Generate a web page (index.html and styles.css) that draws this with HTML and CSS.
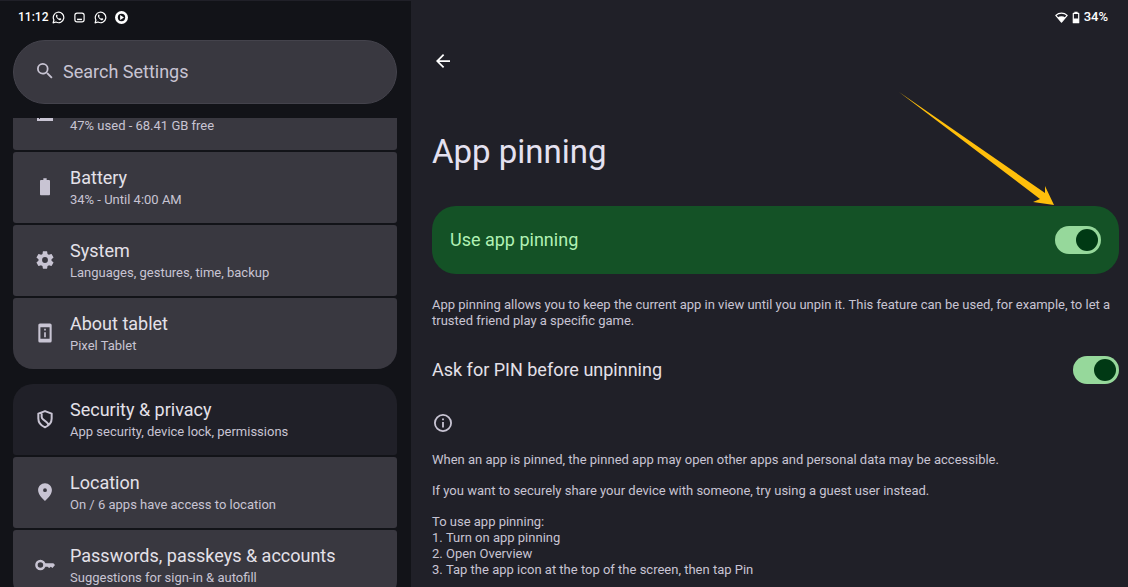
FILE: index.html
```html
<!DOCTYPE html>
<html lang="en">
<head>
<meta charset="utf-8">
<meta name="viewport" content="width=device-width, initial-scale=1">
<title>App pinning</title>
<link rel="stylesheet" href="styles.css">
</head>
<body>
<div class="screen">
  <aside class="sidebar">
    <div class="status">
      <span class="status-text status-time">11:12</span>
      <div class="status-icons">
        <svg class="status-icon" viewBox="0 0 24 24" aria-hidden="true"><path d="M2 22l1.600-5.400A9.700 9.700 0 1 1 7.400 20.400z" fill="none" stroke="currentColor" stroke-width="2.200" stroke-linejoin="round"/><path d="M8.300 6.800c-1.300.8-1.500 2.600-.4 4.600 1.100 2.200 2.800 3.900 5 5 2 .9 3.800.5 4.300-1 .2-.7.1-1-.4-1.200l-2.200-1.100-1.300 1.400c-1.900-.8-3.200-2.100-3.900-3.800l1.100-1.400-1-2.300c-.3-.5-.7-.5-1.200-.2z" fill="currentColor"/></svg>
        <svg class="status-icon" viewBox="0 0 24 24" aria-hidden="true"><rect x="3.500" y="4" width="17" height="16" rx="4" fill="none" stroke="currentColor" stroke-width="2.200"/><path d="M7.500 15.500h9" stroke="currentColor" stroke-width="2.600"/></svg>
        <svg class="status-icon" viewBox="0 0 24 24" aria-hidden="true"><path d="M2 22l1.600-5.400A9.700 9.700 0 1 1 7.400 20.400z" fill="none" stroke="currentColor" stroke-width="2.200" stroke-linejoin="round"/><path d="M8.300 6.800c-1.300.8-1.500 2.600-.4 4.600 1.100 2.200 2.800 3.900 5 5 2 .9 3.800.5 4.300-1 .2-.7.1-1-.4-1.200l-2.200-1.100-1.300 1.400c-1.900-.8-3.200-2.100-3.900-3.800l1.100-1.400-1-2.300c-.3-.5-.7-.5-1.200-.2z" fill="currentColor"/></svg>
        <svg class="status-icon" viewBox="0 0 24 24" aria-hidden="true"><circle cx="12" cy="12" r="12" fill="currentColor"/><circle cx="12" cy="12" r="6.800" fill="#121318"/><path d="M9.500 7.500v9l7-4.500z" fill="currentColor"/></svg>
      </div>
    </div>
    <label class="search">
      <svg class="search-icon" viewBox="3 3 18 18" aria-hidden="true"><path fill="currentColor" d="M15.500 14h-.79l-.28-.27A6.470 6.470 0 0 0 16 9.500 6.500 6.500 0 1 0 9.500 16c1.610 0 3.090-.59 4.230-1.570l.27.28v.79l5 4.990L20.490 19l-4.990-5zm-6 0a4.500 4.500 0 1 1 0-9 4.500 4.500 0 0 1 0 9z"/></svg>
      <input class="search-input" type="search" placeholder="Search Settings" aria-label="Search Settings">
    </label>
    <nav class="settings" aria-label="Settings">
      <div class="group">
        <a class="row row-partial" href="#storage">
          <svg class="row-icon-partial" viewBox="0 0 20 3" aria-hidden="true"><path fill="currentColor" fill-rule="evenodd" d="M2 0h16v3H2zM4 0v1h1V0z"/></svg>
          <span class="row-sub">47% used - 68.41 GB free</span>
        </a>
        <a class="row" href="#battery">
          <svg class="row-icon" viewBox="0 0 24 24" aria-hidden="true"><path fill="currentColor" d="M16.600 3.500H14V1.500h-4v2H7.400C6.600 3.500 6 4 6 4.800v15.800c0 .8.6 1.400 1.400 1.400h9.200c.8 0 1.400-.6 1.400-1.400V4.800c0-.8-.6-1.300-1.400-1.300z"/></svg>
          <span class="row-body"><span class="row-title">Battery</span><span class="row-sub">34% - Until 4:00 AM</span></span>
        </a>
        <a class="row" href="#system">
          <svg class="row-icon" viewBox="1 1 22 22" aria-hidden="true"><path fill="currentColor" d="M19.140 12.940c.04-.3.060-.61.060-.94 0-.32-.02-.64-.07-.94l2.030-1.580c.18-.14.23-.41.12-.61l-1.920-3.320c-.12-.22-.37-.29-.59-.22l-2.390.96c-.5-.38-1.030-.7-1.620-.94l-.36-2.540c-.04-.24-.24-.41-.48-.41h-3.840c-.24 0-.43.17-.47.41l-.36 2.540c-.59.24-1.130.57-1.620.94l-2.390-.96c-.22-.08-.47 0-.59.22L2.740 8.870c-.12.21-.08.47.12.61l2.030 1.580c-.05.3-.09.63-.09.94s.02.64.07.94l-2.030 1.580c-.18.14-.23.41-.12.61l1.920 3.320c.12.22.37.29.59.22l2.390-.96c.5.38 1.030.7 1.620.94l.36 2.540c.05.24.24.41.48.41h3.840c.24 0 .44-.17.47-.41l.36-2.540c.59-.24 1.130-.56 1.620-.94l2.390.96c.22.08.47 0 .59-.22l1.920-3.320c.12-.22.070-.47-.12-.61l-2.010-1.580zM12 15.200A3.200 3.200 0 1 1 12 8.800a3.200 3.200 0 0 1 0 6.400z"/></svg>
          <span class="row-body"><span class="row-title">System</span><span class="row-sub">Languages, gestures, time, backup</span></span>
        </a>
        <a class="row" href="#about">
          <svg class="row-icon" viewBox="0 0 24 24" aria-hidden="true"><path fill="currentColor" fill-rule="evenodd" d="M6 .5h12a2 2 0 0 1 2 2v19a2 2 0 0 1-2 2H6a2 2 0 0 1-2-2v-19c0-1.100.9-2 2-2zM6.500 5v14h11V5zM11 7h2v2h-2zm0 4h2v6h-2z"/></svg>
          <span class="row-body"><span class="row-title">About tablet</span><span class="row-sub">Pixel Tablet</span></span>
        </a>
      </div>
      <div class="group">
        <a class="row row-current" href="#security" aria-current="page">
          <svg class="row-icon" viewBox="0 0 24 24" aria-hidden="true"><path fill="none" stroke="currentColor" stroke-width="2.400" stroke-linejoin="round" d="M12 2.500l8 3v6c0 4.800-3.200 8.500-8 10.500-4.800-2-8-5.700-8-10.500v-6zM8 4.500v4.800c0 1.500.5 2.200 1.500 3l4.500 3.600c1.200 1 1.700 1.800 1.900 3.100"/></svg>
          <span class="row-body"><span class="row-title">Security &amp; privacy</span><span class="row-sub">App security, device lock, permissions</span></span>
        </a>
        <a class="row" href="#location">
          <svg class="row-icon" viewBox="0 0 24 24" aria-hidden="true"><path fill="currentColor" fill-rule="evenodd" d="M12 1.500c-4.600 0-8.300 3.600-8.300 8.200 0 5.200 4.300 9.300 8.300 13 4-3.700 8.300-7.800 8.300-13 0-4.600-3.700-8.200-8.300-8.200zm0 6a2.300 2.300 0 1 1 0 4.600 2.300 2.300 0 0 1 0-4.600z"/></svg>
          <span class="row-body"><span class="row-title">Location</span><span class="row-sub">On / 6 apps have access to location</span></span>
        </a>
        <a class="row" href="#passwords">
          <svg class="row-icon" viewBox="0 0 24 24" aria-hidden="true"><circle cx="6.500" cy="12" r="4.800" fill="none" stroke="currentColor" stroke-width="3"/><path fill="currentColor" d="M11 10h11l2 2-3 3.500-2-1.500-2 1.500-2-1.500h-4z"/></svg>
          <span class="row-body"><span class="row-title">Passwords, passkeys &amp; accounts</span><span class="row-sub">Suggestions for sign-in &amp; autofill</span></span>
        </a>
      </div>
    </nav>
  </aside>

  <main class="detail">
    <div class="status status-end">
      <svg class="status-icon" viewBox="0 0 24 24" aria-hidden="true"><path fill="none" stroke="currentColor" stroke-width="2.200" stroke-linejoin="round" d="M1.500 8C7.500 2.500 16.500 2.500 22.500 8L12 20.500z"/><path fill="currentColor" d="M5 12c4-2.800 10-2.800 14 0L12 20.500z"/></svg>
      <svg class="status-battery" viewBox="0 0 14 24" aria-hidden="true"><path fill="none" stroke="currentColor" stroke-width="2.200" stroke-linejoin="round" d="M2 4.500h10v17H2z"/><path fill="currentColor" d="M4 1.500h6v3H4zM2 14h10v7.500H2z"/></svg>
      <span class="status-text">34%</span>
    </div>
    <button class="back" type="button" aria-label="Back">
      <svg class="back-icon" viewBox="4 4 16 16" aria-hidden="true"><path fill="currentColor" d="M20 11H7.830l5.590-5.590L12 4l-8 8 8 8 1.410-1.410L7.830 13H20v-2z"/></svg>
    </button>
    <h1 class="title">App pinning</h1>
    <label class="card">
      <span class="card-label">Use app pinning</span>
      <input class="switch" type="checkbox" role="switch" checked>
      <svg class="pointer" viewBox="0 0 156 114" aria-hidden="true"><path fill="#ffbf0b" d="M0 0L146 101V94L155 113 134 110 141 107Z"/></svg>
    </label>
    <p class="description">App pinning allows you to keep the current app in view until you unpin it. This feature can be used, for example, to let a trusted friend play a specific game.</p>
    <label class="option">
      <span>Ask for PIN before unpinning</span>
      <input class="switch" type="checkbox" role="switch" checked>
    </label>
    <svg class="info-icon" viewBox="2 2 20 20" aria-hidden="true"><path fill="currentColor" d="M11 7h2v2h-2zm0 4h2v6h-2zm1-9a10 10 0 1 0 0 20 10 10 0 0 0 0-20zm0 18a8 8 0 1 1 0-16 8 8 0 0 1 0 16z"/></svg>
    <div class="notes">
      <p>When an app is pinned, the pinned app may open other apps and personal data may be accessible.</p>
      <p>If you want to securely share your device with someone, try using a guest user instead.</p>
      <div>
        <p>To use app pinning:</p>
        <ol class="steps">
          <li>Turn on app pinning</li>
          <li>Open Overview</li>
          <li>Tap the app icon at the top of the screen, then tap Pin</li>
        </ol>
      </div>
    </div>
  </main>
</div>
</body>
</html>
```
FILE: styles.css
```css
* { box-sizing: border-box; }
body {
  margin: 0;
  background: #121318;
  color: #e4e1e9;
  font-family: Roboto, "Open Sans", sans-serif;
  font-size: 13px;
  line-height: 16px;
}
p, h1, ol { margin: 0; }
.screen {
  display: grid;
  grid-template-columns: minmax(0, 411fr) minmax(0, 717fr);
  height: 100vh;
  overflow: hidden;
}
.sidebar {
  display: flex;
  flex-direction: column;
  min-height: 0;
  padding: 0 14px 0 13px;
  border-top: 1px solid #202028;
}
.status {
  display: flex;
  align-items: center;
  gap: 4px;
  height: 32px;
  padding-left: 5px;
  color: #fff;
}
.status-text { font-weight: 500; }
.status-time { font-size: 12px; }
.status-icons { display: flex; gap: 8px; }
.status-icon { width: 13px; height: 13px; }
.search {
  display: flex;
  flex: none;
  align-items: center;
  gap: 10px;
  height: 64px;
  margin-top: 7px;
  padding: 0 23px 2px;
  border: 1px solid #44434c;
  border-radius: 32px;
  background: #393840;
  color: #c8c4d3;
}
.search-icon { width: 16px; height: 16px; }
.search-input {
  flex: 1;
  min-width: 0;
  padding: 0;
  border: 0;
  outline: 0;
  background: transparent;
  color: inherit;
  font: inherit;
  font-size: 18px;
}
.search-input::placeholder { color: inherit; opacity: 1; }
.settings {
  display: flex;
  flex: 1;
  flex-direction: column;
  gap: 15px;
  min-height: 0;
  margin-top: 14px;
  overflow: hidden;
}
.group {
  display: flex;
  flex: none;
  flex-direction: column;
  gap: 2px;
  border-radius: 20px;
  overflow: hidden;
}
.group:first-child { border-radius: 0 0 20px 20px; }
.row {
  display: flex;
  align-items: center;
  gap: 15px;
  height: 71px;
  padding: 0 22px 2px;
  border-radius: 3px;
  background: #393840;
  color: #c8c4d3;
  text-decoration: none;
}
.row-partial {
  align-items: flex-start;
  height: 32px;
  border-radius: 0 0 3px 3px;
}
.row-icon-partial { flex: none; width: 20px; height: 3px; }
.row-current { background: #202028; }
.row-icon { flex: none; width: 20px; height: 20px; }
.row-body { display: flex; flex-direction: column; gap: 2px; }
.row-title { color: #e4e1e9; font-size: 18px; line-height: 24px; }

.detail {
  display: flex;
  flex-direction: column;
  align-items: stretch;
  padding: 1px 9px 0 21px;
  background: #202028;
}
.status-end { justify-content: flex-end; padding-right: 11px; }
.status-battery { width: 8px; height: 13px; }
.back {
  display: flex;
  align-self: flex-start;
  margin-top: 17px;
  padding: 4px;
  border: 0;
  background: none;
  color: #fff;
}
.back-icon { width: 14px; height: 14px; }
.title {
  margin-top: 60px;
  color: #e4e1f0;
  font-size: 33px;
  font-weight: 400;
  line-height: 40px;
}
.card {
  position: relative;
  display: flex;
  align-items: center;
  justify-content: space-between;
  height: 68px;
  margin-top: 34px;
  padding: 0 18px;
  border-radius: 24px;
  background: #145226;
}
.card-label { color: #b1f1b4; font-size: 18px; line-height: 24px; }
.switch {
  appearance: none;
  width: 46px;
  height: 28px;
  margin: 0;
  padding: 3px;
  border-radius: 14px;
  background: #96d89b;
}
.switch::before {
  content: "";
  display: block;
  width: 22px;
  height: 22px;
  margin-left: auto;
  border-radius: 50%;
  background: #003914;
}
.pointer {
  position: absolute;
  right: 64px;
  bottom: 100%;
  width: 156px;
  height: 114px;
}
.description { margin-top: 23px; color: #c8c4d3; }
.option {
  display: flex;
  align-items: center;
  justify-content: space-between;
  margin-top: 27px;
  font-size: 18px;
  line-height: 24px;
}
.info-icon { width: 18px; height: 18px; margin: 30px 0 0 2px; color: #c8c4d3; }
.notes {
  display: flex;
  flex-direction: column;
  gap: 15px;
  margin-top: 20px;
  color: #c8c4d3;
}
.steps { padding: 0; list-style: decimal inside; }
```
